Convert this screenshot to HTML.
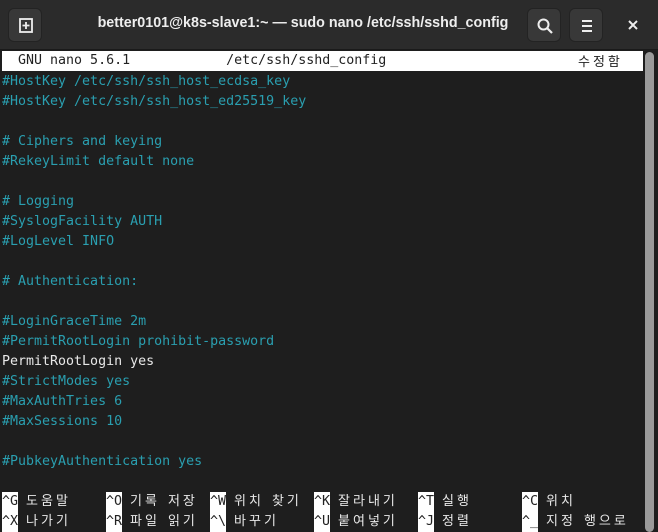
<!DOCTYPE html>
<html><head><meta charset="utf-8"><style>
*{margin:0;padding:0;box-sizing:border-box}
body{width:658px;height:532px;background:#1e1e1e;overflow:hidden;position:relative;font-family:"DejaVu Sans Mono","Liberation Mono","Noto Sans CJK KR",monospace}
.tb{position:absolute;left:0;top:0;width:658px;height:50px;background:#2b2b2b;border-bottom:1px solid #1a1a1a}
.btn{position:absolute;top:8px;width:34px;height:34px;background:#383838;border-radius:6px;border:1px solid #232323}
.title{position:absolute;left:48px;top:15px;width:510px;text-align:center;color:#eee;font:bold 14.3px "Liberation Sans",sans-serif}
.r{position:absolute;left:2px;height:20px;line-height:20px;font-size:13.3px;white-space:pre;color:#2a9fb0}
.w{color:#e8e8e8}
.hdr{position:absolute;left:2px;top:51px;width:641px;height:20px;background:#fff;color:#222;font-size:13.3px;line-height:20px;white-space:pre}
.k{font-family:"Noto Sans CJK KR",sans-serif;font-size:13px;letter-spacing:3px}
.inv{background:#fff;color:#222;display:inline-block;height:20px}
.sb{position:absolute;left:645px;top:52px;width:9px;height:480px;background:#9a9a9a;border-radius:5px}
.c{position:absolute;height:20px;line-height:20px;font-size:13.3px;white-space:pre;color:#e8e8e8}
</style></head><body>
<div class="tb">
<div class="btn" style="left:8px"><svg width="34" height="34" viewBox="0 0 34 34"><rect x="11" y="10" width="12" height="13" fill="none" stroke="#eee" stroke-width="1.8"/><path d="M17 13v7M13.5 16.5h7" stroke="#eee" stroke-width="1.8"/></svg></div>
<div class="title">better0101@k8s-slave1:~ — sudo nano /etc/ssh/sshd_config</div>
<div class="btn" style="left:527px"><svg width="34" height="34" viewBox="0 0 34 34"><circle cx="15.5" cy="15.5" r="5" fill="none" stroke="#eee" stroke-width="2"/><path d="M19 19l5 5" stroke="#eee" stroke-width="2.2"/></svg></div>
<div class="btn" style="left:569px"><svg width="34" height="34" viewBox="0 0 34 34"><path d="M12 12h10M12 17h10M12 22h10" stroke="#eee" stroke-width="2"/></svg></div>
<svg style="position:absolute;left:626px;top:18px" width="14" height="14" viewBox="0 0 14 14"><path d="M3 3l8 8M11 3l-8 8" stroke="#eee" stroke-width="2"/></svg>
</div>
<div class="hdr">  GNU nano 5.6.1            /etc/ssh/sshd_config</div>
<div class="c" style="left:578px;top:51px;color:#222"><span class="k">수정함</span></div>
<div class="r" style="top:72px">#HostKey /etc/ssh/ssh_host_ecdsa_key</div>
<div class="r" style="top:92px">#HostKey /etc/ssh/ssh_host_ed25519_key</div>
<div class="r" style="top:132px"># Ciphers and keying</div>
<div class="r" style="top:152px">#RekeyLimit default none</div>
<div class="r" style="top:192px"># Logging</div>
<div class="r" style="top:212px">#SyslogFacility AUTH</div>
<div class="r" style="top:232px">#LogLevel INFO</div>
<div class="r" style="top:272px"># Authentication:</div>
<div class="r" style="top:312px">#LoginGraceTime 2m</div>
<div class="r" style="top:332px">#PermitRootLogin prohibit-password</div>
<div class="r w" style="top:352px">PermitRootLogin yes</div>
<div class="r" style="top:372px">#StrictModes yes</div>
<div class="r" style="top:392px">#MaxAuthTries 6</div>
<div class="r" style="top:412px">#MaxSessions 10</div>
<div class="r" style="top:452px">#PubkeyAuthentication yes</div>

<div class="c" style="left:2px;top:490px"><span class="inv">^G</span> <span class="k">도움말</span></div>
<div class="c" style="left:106px;top:490px"><span class="inv">^O</span> <span class="k">기록</span> <span class="k">저장</span></div>
<div class="c" style="left:210px;top:490px"><span class="inv">^W</span> <span class="k">위치</span> <span class="k">찾기</span></div>
<div class="c" style="left:314px;top:490px"><span class="inv">^K</span> <span class="k">잘라내기</span></div>
<div class="c" style="left:418px;top:490px"><span class="inv">^T</span> <span class="k">실행</span></div>
<div class="c" style="left:522px;top:490px"><span class="inv">^C</span> <span class="k">위치</span></div>
<div class="c" style="left:2px;top:510px"><span class="inv">^X</span> <span class="k">나가기</span></div>
<div class="c" style="left:106px;top:510px"><span class="inv">^R</span> <span class="k">파일</span> <span class="k">읽기</span></div>
<div class="c" style="left:210px;top:510px"><span class="inv">^\</span> <span class="k">바꾸기</span></div>
<div class="c" style="left:314px;top:510px"><span class="inv">^U</span> <span class="k">붙여넣기</span></div>
<div class="c" style="left:418px;top:510px"><span class="inv">^J</span> <span class="k">정렬</span></div>
<div class="c" style="left:522px;top:510px"><span class="inv">^_</span> <span class="k">지정</span> <span class="k">행으로</span></div>
<div class="sb"></div>
</body></html>
